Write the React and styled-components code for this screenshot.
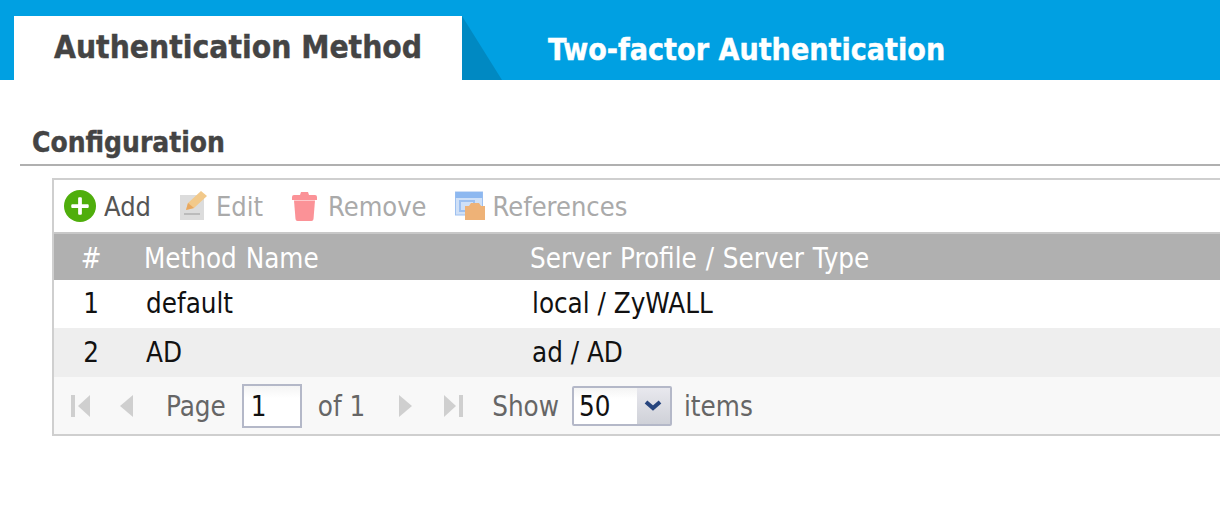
import styled, { createGlobalStyle } from "styled-components";
import { FaPlus } from "react-icons/fa";

const GlobalStyle = createGlobalStyle`
  html, body {
    margin: 0;
    padding: 0;
    background: #fff;
    overflow: hidden;
  }
  body {
    font-family: "DejaVu Sans", "Liberation Sans", sans-serif;
  }
`;

const Page = styled.div`
  width: 1220px;
  height: 512px;
  overflow: hidden;
  background: #fff;
`;

const TabBar = styled.div`
  height: 64px;
  padding: 16px 0 0 14px;
  display: flex;
  background: #00a0e2;
`;

const ActiveTab = styled.div`
  position: relative;
  width: 408px;
  padding-left: 40px;
  background: #fff;
  color: #444;
  font-size: 31.5px;
  font-weight: 700;
  line-height: 62px;
  font-stretch: condensed;
  -webkit-text-stroke: 0.4px #444;

  &::after {
    content: "";
    position: absolute;
    left: 100%;
    top: 0;
    width: 40px;
    height: 64px;
    background: #0089c2;
    clip-path: polygon(0 0, 100% 100%, 0 100%);
  }
`;

const Tab = styled.div`
  margin-left: 86px;
  color: #fff;
  font-size: 30.1px;
  font-weight: 700;
  line-height: 67px;
  font-stretch: condensed;
  -webkit-text-stroke: 0.4px #fff;
`;

const Content = styled.div`
  padding: 44px 0 0 20px;
`;

const SectionTitle = styled.div`
  height: 40px;
  padding-left: 12px;
  border-bottom: 2px solid #b0b0b0;
  color: #444;
  font-size: 27.9px;
  font-weight: 700;
  line-height: 38px;
  font-stretch: condensed;
  -webkit-text-stroke: 0.4px #444;
`;

const Panel = styled.div`
  margin: 12px 0 0 32px;
  border: 2px solid #cfcfcf;
  border-right: 0;
  font-size: 27.5px;
  font-stretch: condensed;
`;

const Toolbar = styled.div`
  height: 52px;
  padding-left: 10px;
  display: flex;
  align-items: center;
  border-bottom: 2px solid #c8c8c8;
  background: #fff;
  font-size: 27px;
`;

const ToolButton = styled.div`
  display: flex;
  align-items: center;
  gap: ${(p) => p.$gap || 8}px;
  margin-right: ${(p) => p.$after || 0}px;
  color: ${(p) => (p.$disabled ? "#aaa" : "#555")};
`;

const AddIcon = styled.span`
  width: 32px;
  height: 32px;
  border-radius: 50%;
  display: flex;
  align-items: center;
  justify-content: center;
  background: #4fae0c;
  color: #fff;
  font-size: 20px;
`;

const Row = styled.div`
  display: grid;
  grid-template-columns: 90px 386px 1fr;
  align-items: center;
  height: ${(p) => p.$height}px;
  padding-bottom: 2px;
  box-sizing: border-box;
  background: ${(p) => p.$bg};
  color: ${(p) => p.$color};
`;

const HeaderRow = styled(Row)`
  padding: 2px 0 0;
  word-spacing: 1px;
`;

const NumCell = styled.div`
  text-align: center;
  padding-right: 16px;
`;

const Cell = styled.div`
  padding-left: ${(p) => p.$indent || 0}px;
`;

const Pager = styled.div`
  height: 57px;
  padding-left: 16px;
  display: flex;
  align-items: center;
  background: #f8f8f8;
  color: #666;
`;

const PagerIcon = styled.svg`
  width: 24px;
  height: 28px;
  margin-right: ${(p) => p.$after || 0}px;
  fill: #cfcfcf;
`;

const PagerGap = styled.span`
  width: ${(p) => p.$width}px;
`;

const PageInput = styled.div`
  width: 49px;
  height: 40px;
  margin: 0 16px;
  padding-left: 7px;
  border: 2px solid #b4b8c8;
  background: linear-gradient(#f4f4f4, #fff 30%);
  color: #111;
  line-height: 40px;
`;

const ComboBox = styled.div`
  display: flex;
  height: 36px;
  margin: 0 12px 0 13px;
  border: 2px solid #b4b8c8;
  border-radius: 2px;
`;

const ComboValue = styled.div`
  width: 58px;
  padding-left: 5px;
  background: linear-gradient(#f4f4f4, #fff 30%);
  color: #111;
  line-height: 36px;
`;

const ComboArrow = styled.div`
  width: 33px;
  display: flex;
  align-items: center;
  justify-content: center;
  background: linear-gradient(#e8e8ee, #cfd1d8);
`;

const First = ({ after }) => (
  <PagerIcon viewBox="0 0 24 28" $after={after}>
    <rect x="1" y="3" width="4" height="22" />
    <path d="M20 3v22L8 14z" />
  </PagerIcon>
);
const Prev = ({ after }) => (
  <PagerIcon viewBox="0 0 24 28" $after={after}>
    <path d="M18 3v22L5 14z" />
  </PagerIcon>
);
const Next = ({ after }) => (
  <PagerIcon viewBox="0 0 24 28" $after={after}>
    <path d="M6 3v22l13-11z" />
  </PagerIcon>
);
const Last = ({ after }) => (
  <PagerIcon viewBox="0 0 24 28" $after={after}>
    <path d="M4 3v22l12-11z" />
    <rect x="19" y="3" width="4" height="22" />
  </PagerIcon>
);

const EditIcon = () => (
  <svg width="28" height="30" viewBox="0 0 28 30">
    <rect x="0" y="4" width="24" height="25" fill="#dcdcdc" />
    <rect x="4" y="22" width="16" height="2" fill="#bbb" />
    <path d="M6 19l2-7L21 0l6 5L14 17z" fill="#f2c98a" />
    <path d="M6 19l2-7 6 5z" fill="#e8a860" />
  </svg>
);

const TrashIcon = () => (
  <svg width="25" height="29" viewBox="0 0 25 29">
    <path d="M9 0h7l1 3h6q2 0 2 2v3H0V5q0-2 2-2h6z" fill="#fb9297" />
    <path d="M2 8.500h21l-1.500 18.500q-.2 2-2 2h-14q-1.800 0-2-2z" fill="#fb9297" />
  </svg>
);

const RefIcon = () => (
  <svg width="30" height="30" viewBox="0 0 30 30">
    <rect x="0.500" y="1" width="27" height="23" fill="#cfe0f7" stroke="#9dc0f0" />
    <rect x="0.500" y="1" width="27" height="6" fill="#8db8f0" />
    <rect x="5" y="10" width="14" height="10" fill="none" stroke="#9dc0f0" strokeWidth="2" />
    <path d="M10 15h4l2-3h8l2 3h4v14H10z" fill="#eeb277" />
  </svg>
);

export default function App() {
  return (
    <Page>
      <GlobalStyle />
      <TabBar>
        <ActiveTab>Authentication Method</ActiveTab>
        <Tab>Two-factor Authentication</Tab>
      </TabBar>
      <Content>
        <SectionTitle>Configuration</SectionTitle>
        <Panel>
          <Toolbar>
            <ToolButton $after={29}>
              <AddIcon>
                <FaPlus />
              </AddIcon>
              Add
            </ToolButton>
            <ToolButton $disabled $after={29}>
              <EditIcon />
              Edit
            </ToolButton>
            <ToolButton $disabled $after={28} $gap={11}>
              <TrashIcon />
              Remove
            </ToolButton>
            <ToolButton $disabled $gap={8}>
              <RefIcon />
              References
            </ToolButton>
          </Toolbar>
          <HeaderRow $height={46} $bg="#b0b0b0" $color="#fff">
            <NumCell>#</NumCell>
            <Cell>Method Name</Cell>
            <Cell>Server Profile / Server Type</Cell>
          </HeaderRow>
          <Row $height={48} $bg="#fff" $color="#111">
            <NumCell>1</NumCell>
            <Cell $indent={2}>default</Cell>
            <Cell $indent={2}>local / ZyWALL</Cell>
          </Row>
          <Row $height={49} $bg="#eeeeee" $color="#111">
            <NumCell>2</NumCell>
            <Cell $indent={2}>AD</Cell>
            <Cell $indent={2}>ad / AD</Cell>
          </Row>
          <Pager>
            <First after={21} />
            <Prev after={27} />
            Page
            <PageInput>1</PageInput>
            of 1
            <PagerGap $width={28} />
            <Next after={23} />
            <Last after={28} />
            Show
            <ComboBox>
              <ComboValue>50</ComboValue>
              <ComboArrow>
                <svg width="18" height="12" viewBox="0 0 18 12">
                  <path d="M2 2l7 6 7-6" fill="none" stroke="#27457e" strokeWidth="4" />
                </svg>
              </ComboArrow>
            </ComboBox>
            items
          </Pager>
        </Panel>
      </Content>
    </Page>
  );
}
